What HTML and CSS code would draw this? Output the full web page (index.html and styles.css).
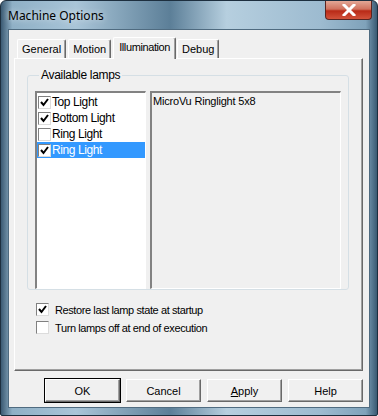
FILE: index.html
```html
<!DOCTYPE html>
<html>
<head>
    <title>Machine Options</title>
    <link rel="stylesheet" href="styles.css">
</head>
<body>

<div class="window">
    <div class="titlebar">
        <span class="title">Machine Options</span>
        <div class="close-btn">
            <svg width="14" height="12" viewBox="0 0 14 12"><path d="M2 1 L12 11 M12 1 L2 11" stroke="#fff" stroke-width="3" stroke-linecap="square"/></svg>
        </div>
    </div>

    <div class="client">
        <div class="tabs">
            <div class="tab">General</div>
            <div class="tab">Motion</div>
            <div class="tab active">Illumination</div>
            <div class="tab">Debug</div>
        </div>

        <div class="panel">
            <fieldset class="group">
                <legend>Available lamps</legend>
                <div class="lamp-area">
                    <div class="listbox">
                        <div class="item"><span class="check on"></span><span class="label">Top Light</span></div>
                        <div class="item"><span class="check on"></span><span class="label">Bottom Light</span></div>
                        <div class="item"><span class="check"></span><span class="label">Ring Light</span></div>
                        <div class="item selected"><span class="check on"></span><span class="label">Ring Light</span></div>
                    </div>
                    <div class="details">MicroVu Ringlight 5x8</div>
                </div>
            </fieldset>

            <div class="options">
                <div class="option"><span class="check on"></span>Restore last lamp state at startup</div>
                <div class="option"><span class="check"></span>Turn lamps off at end of execution</div>
            </div>
        </div>

        <div class="buttons">
            <button class="btn default">OK</button>
            <button class="btn">Cancel</button>
            <button class="btn"><u>A</u>pply</button>
            <button class="btn">Help</button>
        </div>
    </div>
</div>

</body>
</html>
```

FILE: styles.css
```css
body { margin: 0; background: #fff; font-family: 'Liberation Sans', Arial, sans-serif; font-size: 11px; color: #000; }

.window {
    width: 378px;
    height: 416px;
    box-sizing: border-box;
    border: 1px solid #1d2f3f;
    border-radius: 6px 6px 2px 2px;
    background: linear-gradient(90deg, #3b5a73 0%, #8fb0c6 3%, #a9c5d8 20%, #5c7f98 45%, #b6cfdf 60%, #9dbbd0 85%, #7fa2ba 97%, #3b5a73 100%);
    display: flex;
    flex-direction: column;
    overflow: hidden;
}
.titlebar {
    height: 28px;
    display: flex;
    align-items: flex-start;
}
.title {
    font-family: 'Noto Sans', sans-serif;
    font-size: 12px;
    color: #000;
    margin: 6px 0 0 7px;
    text-shadow: 0 0 6px rgba(255,255,255,0.8);
}
.close-btn {
    margin-left: auto;
    margin-right: 5px;
    width: 47px;
    height: 19px;
    box-sizing: border-box;
    border: 1px solid #5a2420;
    border-top: none;
    border-radius: 0 0 4px 4px;
    background: linear-gradient(180deg, #e3a796 0%, #d0725e 45%, #b92a17 55%, #d2523b 100%);
    display: flex;
    align-items: center;
    justify-content: center;
}

.client {
    margin: 0 7px 7px 7px;
    flex: 1;
    background: #f0f0f0;
    border: 1px solid #4f6b80;
    display: flex;
    flex-direction: column;
}
.tabs {
    display: flex;
    padding: 8px 0 0 8px;
    height: 20px;
    align-items: flex-end;
}
.tab {
    height: 18px;
    line-height: 19px;
    padding: 0 4px;
    border-top: 1px solid #fff;
    border-left: 1px solid #fff;
    border-right: 1px solid #696969;
    box-shadow: inset -1px 0 0 #a0a0a0;
    border-radius: 2px 2px 0 0;
    margin-right: 2px;
}
.tab.active {
    height: 21px;
    line-height: 18px;
    margin: 0 1px -1px 0;
    padding: 0 5px;
    background: #f0f0f0;
    letter-spacing: -0.4px;
    position: relative;
    z-index: 1;
}
.panel {
    margin: 0 6px 0 5px;
    height: 313px;
    box-sizing: border-box;
    border-top: 1px solid #fff;
    border-left: 1px solid #fff;
    border-right: 1px solid #696969;
    border-bottom: 1px solid #696969;
    box-shadow: inset -1px -1px 0 #a0a0a0;
    display: flex;
    flex-direction: column;
    padding: 9px 0 0 12px;
}
.group {
    margin: 0 13px 0 0;
    padding: 9px 7px 6px 7px;
    height: 222px;
    box-sizing: border-box;
    border: 1px solid #d5dfe5;
    border-radius: 3px;
}
.group legend {
    font-size: 12px;
    letter-spacing: -0.3px;
    padding: 0 2px;
    margin-left: 4px;
}
.lamp-area {
    display: flex;
    gap: 4px;
    height: 198px;
}
.listbox {
    width: 111px;
    box-sizing: border-box;
    background: #fff;
    border-top: 2px solid #828282;
    border-left: 2px solid #828282;
    border-right: 1px solid #fff;
    border-bottom: 1px solid #fff;
    padding-top: 1px;
}
.item {
    height: 16px;
    display: flex;
    align-items: center;
    padding-left: 1px;
    font-size: 12px;
    letter-spacing: -0.4px;
}
.item .label {
    margin-left: 1px;
}
.item.selected {
    background: #3399ff;
    color: #fff;
}
.details {
    flex: 1;
    box-sizing: border-box;
    border-top: 2px solid #828282;
    border-left: 2px solid #828282;
    border-right: 1px solid #fff;
    border-bottom: 1px solid #fff;
    padding: 2px 1px;
    font-size: 11px;
    letter-spacing: -0.2px;
}
.check {
    width: 13px;
    height: 13px;
    box-sizing: border-box;
    background: #fff;
    border-top: 1px solid #808080;
    border-left: 1px solid #808080;
    border-right: 1px solid #dcdcdc;
    border-bottom: 1px solid #dcdcdc;
    flex-shrink: 0;
}
.check.on {
    background: #fff url("data:image/svg+xml;utf8,<svg xmlns='http://www.w3.org/2000/svg' width='11' height='11'><path d='M2 5 L4.5 8 L9 2' fill='none' stroke='black' stroke-width='2'/></svg>") no-repeat center;
}
.options {
    padding: 13px 0 0 9px;
    display: flex;
    flex-direction: column;
    gap: 5px;
}
.option {
    display: flex;
    align-items: center;
    gap: 6px;
    font-size: 11px;
    letter-spacing: -0.4px;
    height: 13px;
}

.buttons {
    display: flex;
    justify-content: flex-end;
    gap: 6px;
    padding: 8px 6px 0 0;
}
.btn {
    width: 75px;
    height: 23px;
    font-family: 'Liberation Sans', Arial, sans-serif;
    font-size: 11px;
    background: #f0f0f0;
    border-top: 1px solid #fff;
    border-left: 1px solid #fff;
    border-right: 1px solid #696969;
    border-bottom: 1px solid #696969;
    box-shadow: inset -1px -1px 0 #a0a0a0;
    padding: 0;
    color: #000;
}
.btn.default {
    outline: 1px solid #000;
    outline-offset: 0;
}
```
